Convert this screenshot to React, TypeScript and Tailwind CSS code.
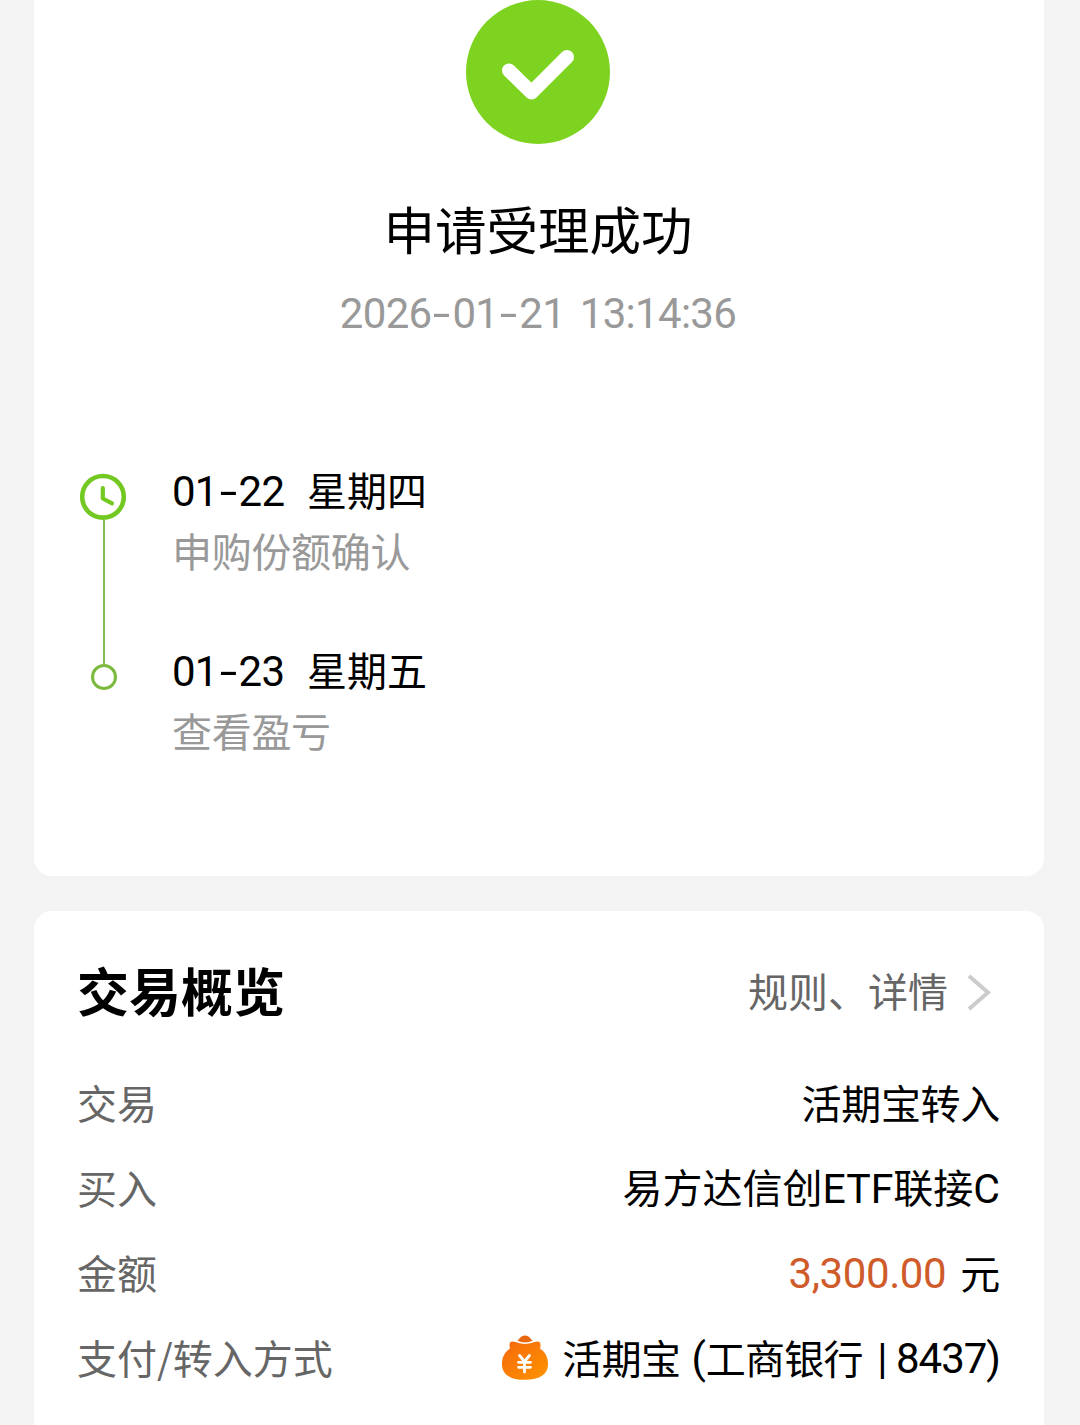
import { Fragment, type ReactNode } from "react";

interface DigitsProps {
  text: string;
  className?: string;
}

// Numbers are set in Roboto, with the hyphens stretched to a full digit width
function Digits({ text, className = "" }: DigitsProps) {
  return (
    <span className={`font-[Roboto,sans-serif] text-[42px] whitespace-pre ${className}`}>
      {text.split("-").map((part, i) => (
        <Fragment key={i}>
          {i > 0 && (
            <span className="inline-block w-[21px] text-center scale-x-150 tracking-normal">-</span>
          )}
          {part}
        </Fragment>
      ))}
    </span>
  );
}

function SuccessIcon() {
  return (
    <svg className="w-36 h-36 shrink-0" viewBox="0 0 144 144" fill="none">
      <circle cx="72" cy="72" r="72" fill="#7ed321" />
      <path
        d="M43 70.5L65.5 92.5L101 57"
        stroke="#fff"
        strokeWidth="14"
        strokeLinecap="round"
        strokeLinejoin="round"
      />
    </svg>
  );
}

function ClockIcon() {
  return (
    <svg className="w-12 h-12 shrink-0" viewBox="0 0 48 48" fill="none" stroke="#73c922">
      <circle cx="24" cy="23.8" r="20.8" strokeWidth="4.6" />
      <path d="M23.800 15V25.500L33 30.300" strokeWidth="4.200" strokeLinecap="round" strokeLinejoin="round" />
    </svg>
  );
}

function MoneyBagIcon() {
  return (
    <svg className="w-[46px] h-[46px] shrink-0 -mt-0.5" viewBox="0 0 46 46" fill="none">
      <defs>
        <linearGradient id="bag" x1="0" y1="0" x2="1" y2="1">
          <stop offset="0" stopColor="#f4690c" />
          <stop offset="1" stopColor="#ff9400" />
        </linearGradient>
      </defs>
      <path d="M15 5.500C17.500 5 18 0.500 23 0.500S28.500 5 31 5.500Q23 9.500 15 5.500Z" fill="#e8680f" />
      <path
        d="M8 7.500Q9.500 6 12.500 6.800Q23 11 33.500 6.800Q36.500 6 38 7.500Q39 10 38 13.500C43.500 17 46 22.500 46 29C46 39.500 38 44.800 23 44.800S0 39.500 0 29C0 22.500 2.500 17 8 13.500Q7 10 8 7.500Z"
        fill="url(#bag)"
      />
      <path
        d="M17.500 20.500L22.500 26.500L27.500 20.500M16.500 27.300H28.500M16.500 32.300H28.500M22.500 27V37"
        stroke="#fff"
        strokeWidth="2.800"
        strokeLinecap="round"
      />
    </svg>
  );
}

interface StepProps {
  date: string;
  day: string;
  note: string;
}

function Step({ date, day, note }: StepProps) {
  return (
    <div className="h-[180px]">
      <div className="h-[60px] flex items-center">
        <Digits text={date} className="w-[135px] tracking-[-0.8px]" />
        <span className="-mt-1.5 tracking-normal">{day}</span>
      </div>
      <p className="h-[60px] leading-[56px] text-[#999]">{note}</p>
    </div>
  );
}

function Row({ label, children }: { label: string; children: ReactNode }) {
  return (
    <div className="h-[85px] flex items-center justify-between">
      <span className="-mt-1 -ml-px tracking-normal text-[#666]">{label}</span>
      <div className="flex items-center">{children}</div>
    </div>
  );
}

export default function App() {
  return (
    <div className="w-[1080px] h-[1425px] overflow-hidden bg-[#f4f4f4] pl-[34px] pr-9 flex flex-col gap-[35px] font-['Noto_Sans_CJK_SC',sans-serif] text-[40px] leading-[60px] tracking-[-0.3px] text-black">
      <section className="h-[876px] shrink-0 bg-white rounded-b-[18px]">
        <div className="flex flex-col items-center pr-0.5">
          <SuccessIcon />
          <h1 className="mt-[52px] h-[64px] leading-[64px] text-[51.5px] tracking-normal">申请受理成功</h1>
          <div className="mt-[21px] h-[60px] text-[#999]">
            <Digits text="2026-01-21 13:14:36" className="tracking-[-0.7px] [word-spacing:5px]" />
          </div>
        </div>

        <div className="mt-[121px] pl-[45px] flex">
          {/* Timeline */}
          <div className="w-12 mt-[11px] flex flex-col items-center">
            <ClockIcon />
            <div className="w-[2px] h-[144px] -mt-px ml-0.5 bg-[#85bd55]" />
            <div className="w-[26px] h-[26px] ml-px shrink-0 rounded-full border-3 border-[#7cba3d]" />
          </div>
          <div className="ml-[45px]">
            <Step date="01-22" day="星期四" note="申购份额确认" />
            <Step date="01-23" day="星期五" note="查看盈亏" />
          </div>
        </div>
      </section>

      <section className="h-[540px] shrink-0 bg-white rounded-t-[18px] px-11 pt-[45px]">
        <div className="h-[72px] mb-[33px] flex items-center justify-between">
          <h2 className="-mt-1 -ml-px text-[52px] font-bold tracking-normal">交易概览</h2>
          <div className="flex items-center text-[#666]">
            <span className="-mt-1 tracking-normal">规则、详情</span>
            <svg className="w-[26px] h-10 ml-[18px] mr-2" viewBox="0 0 26 40" fill="none">
              <path d="M3 4L22 20.500L3 37" stroke="#ccc" strokeWidth="4" />
            </svg>
          </div>
        </div>
        <Row label="交易">
          <span className="-mt-1">活期宝转入</span>
        </Row>
        <Row label="买入">
          <span className="-mt-0.5 tracking-normal">
            易方达信创<span className="font-[Roboto,sans-serif] text-[41px]">ETF</span>联接
            <span className="font-[Roboto,sans-serif] text-[41px]">C</span>
          </span>
        </Row>
        <Row label="金额">
          <Digits text="3,300.00" className="mr-3.5 text-[#cf5b2b] tracking-[-0.4px]" />
          <span className="-mt-1">元</span>
        </Row>
        <Row label="支付/转入方式">
          <MoneyBagIcon />
          <span className="-mt-1 ml-[14px] tracking-[-0.6px]">活期宝</span>
          <Digits text=" (" className="ml-px" />
          <span className="-mt-1 tracking-[-0.7px]">工商银行</span>
          <Digits text=" | 8437)" className="ml-[5px] tracking-[-1px]" />
        </Row>
      </section>
    </div>
  );
}
